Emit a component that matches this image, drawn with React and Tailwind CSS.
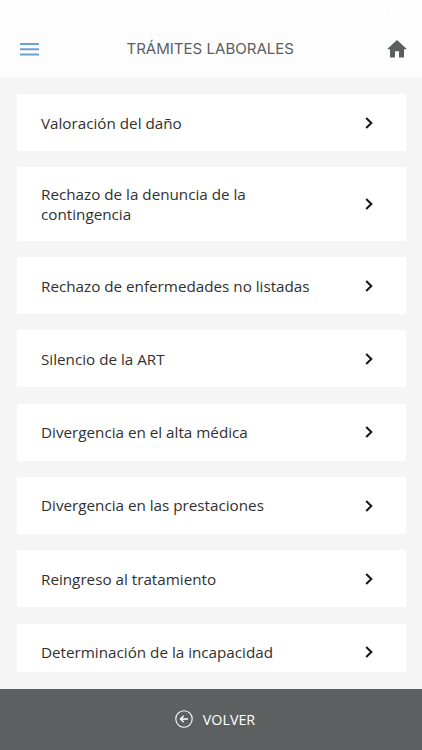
import { Wifi } from 'lucide-react'

const TRAMITES = [
  { id: 'valoracion', label: 'Valoración del daño' },
  { id: 'rechazo-denuncia', label: 'Rechazo de la denuncia de la contingencia' },
  { id: 'rechazo-enfermedades', label: 'Rechazo de enfermedades no listadas' },
  { id: 'silencio', label: 'Silencio de la ART' },
  { id: 'divergencia-alta', label: 'Divergencia en el alta médica' },
  { id: 'divergencia-prestaciones', label: 'Divergencia en las prestaciones' },
  { id: 'reingreso', label: 'Reingreso al tratamiento' },
  { id: 'determinacion', label: 'Determinación de la incapacidad' },
]

// White on near-white: the system bar is barely visible over the header
function StatusBar() {
  return (
    <div className="grid h-[21px] shrink-0 grid-cols-3 items-center bg-[#fdfdfd] px-[7px] font-['Inter',sans-serif] text-[12px] leading-none text-white">
      <div className="flex items-center gap-[6px]">
        <span>Carrier</span>
        <Wifi className="size-[12px]" />
      </div>
      <span className="text-center font-medium">10:26 AM</span>
      <div className="mr-[9px] h-[8px] w-[16px] justify-self-end rounded-[2px] bg-white" />
    </div>
  )
}

function Header() {
  return (
    <header className="flex h-[56.5px] shrink-0 items-start justify-between bg-[#fdfdfd] pl-[19.5px] pr-[15px] pt-[17px]">
      <button type="button" aria-label="Menú" className="flex h-[22px] w-[20px] items-center">
        <svg viewBox="0 0 19 13" className="h-[13px] w-[19px]" fill="#69a3cc">
          <rect width="19" height="2" />
          <rect y="5.25" width="19" height="2" />
          <rect y="10.5" width="19" height="2" />
        </svg>
      </button>
      <h1 className="-ml-[6px] font-['Inter',sans-serif] text-[15.05px] leading-[22px] text-[#5c6061]">TRÁMITES LABORALES</h1>
      <button type="button" aria-label="Inicio" className="flex h-[22px] w-[20px] items-center">
        <svg viewBox="2 3 20 17" preserveAspectRatio="none" className="h-[17.5px] w-[20px]" fill="#5b5f60">
          <path d="M10 20v-6h4v6h5v-8h3L12 3 2 12h3v8z" />
        </svg>
      </button>
    </header>
  )
}

function TramiteCard({ label }) {
  return (
    <li className="flex min-h-[57px] shrink-0 items-center justify-between bg-white py-[16.4px] pl-[24.5px] pr-[33px]">
      <span className={`text-[15.22px] leading-[20.3px] text-[#303030] ${label.length > 36 ? 'w-[220px]' : ''}`}>{label}</span>
      <svg viewBox="0 0 8 12" className="h-[12px] w-[8px]" fill="none" stroke="#1a1a1a" strokeWidth="2.1">
        <path d="M1.2 1 6.3 6 1.2 11" />
      </svg>
    </li>
  )
}

export default function App() {
  return (
    <div className="flex h-[750px] w-[422px] flex-col overflow-hidden bg-[#f5f5f5] font-['Open_Sans',sans-serif]">
      <StatusBar />
      <Header />
      <main className="min-h-0 flex-1 px-[16.5px] pb-[16.5px] pt-[16.7px]">
        <ul className="flex h-full flex-col gap-[16.3px] overflow-hidden">
          {TRAMITES.map((tramite) => (
            <TramiteCard key={tramite.id} label={tramite.label} />
          ))}
        </ul>
      </main>
      <footer className="flex h-[61.5px] shrink-0 items-center justify-center bg-[#5c6061]">
        <button type="button" className="flex items-center gap-[10px] pl-[8px] text-white">
          <svg viewBox="0 0 18 18" className="size-[18px]" fill="none" stroke="currentColor" strokeWidth="1.1">
            <circle cx="9" cy="9" r="8.2" />
            <path d="M13 9H5.5M8.7 5.8 5.5 9l3.2 3.2" strokeWidth="1.3" />
          </svg>
          <span className="pt-[2px] text-[14.3px] leading-[20px]">VOLVER</span>
        </button>
      </footer>
    </div>
  )
}
